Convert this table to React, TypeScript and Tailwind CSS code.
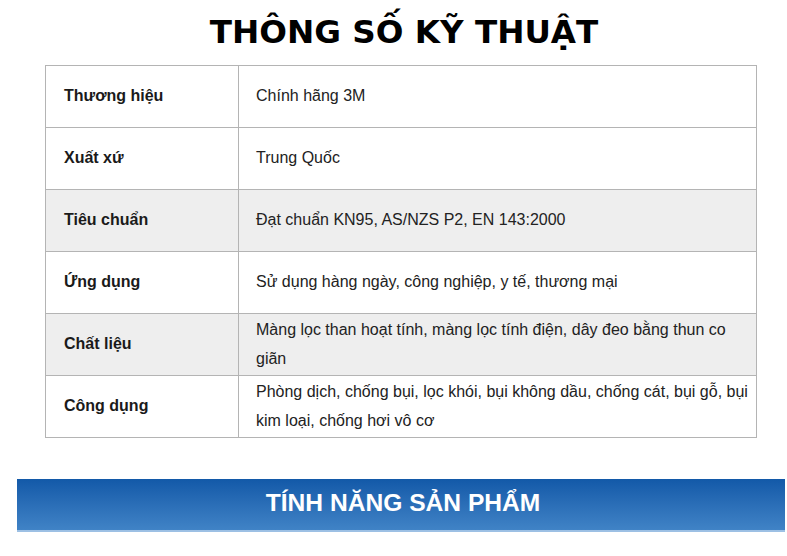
const rows = [
  { label: "Thương hiệu", value: "Chính hãng 3M", gray: false },
  { label: "Xuất xứ", value: "Trung Quốc", gray: false },
  { label: "Tiêu chuẩn", value: "Đạt chuẩn KN95, AS/NZS P2, EN 143:2000", gray: true },
  { label: "Ứng dụng", value: "Sử dụng hàng ngày, công nghiệp, y tế, thương mại", gray: false },
  { label: "Chất liệu", value: "Màng lọc than hoạt tính, màng lọc tính điện, dây đeo bằng thun co giãn", gray: true },
  { label: "Công dụng", value: "Phòng dịch, chống bụi, lọc khói, bụi không dầu, chống cát, bụi gỗ, bụi kim loại, chống hơi vô cơ", gray: false },
]

export default function App() {
  return (
    <div className="w-[787px] h-[556px] overflow-hidden bg-white font-['Liberation_Sans',Arial,sans-serif]">
      <h2 className="pt-[9px] text-center text-[32.6px] leading-[46px] font-bold text-black font-['DejaVu_Sans',Verdana,sans-serif] pl-[21px]">
        THÔNG SỐ KỸ THUẬT
      </h2>

      <div className="ml-[45px] mt-[10px] w-[712px] border-t border-l border-[#b4b4b4]">
        {rows.map((row) => (
          <div
            key={row.label}
            className={`grid grid-cols-[193px_1fr] h-[62px] border-b border-[#b4b4b4] ${row.gray ? "bg-[#eeeeee]" : "bg-white"}`}
          >
            <div className="flex items-center pl-[18px] pb-[2px] border-r border-[#b4b4b4] text-[16px] font-bold text-[#1a1a1a]">
              {row.label}
            </div>
            <div className="flex items-center pl-[17px] pr-[6px] pb-[2px] border-r border-[#b4b4b4] text-[16px] leading-[29px] text-[#222]">
              {row.value}
            </div>
          </div>
        ))}
      </div>

      <div className="ml-[17px] mt-[41px] w-[768px] h-[53px] flex items-center justify-center pl-[4px] pb-[2px] bg-linear-to-b from-[#1259a8] to-[#4083c6] border-b-2 border-[#9dc0e4]">
        <span className="text-[24.6px] font-bold text-white">TÍNH NĂNG SẢN PHẨM</span>
      </div>
    </div>
  )
}
